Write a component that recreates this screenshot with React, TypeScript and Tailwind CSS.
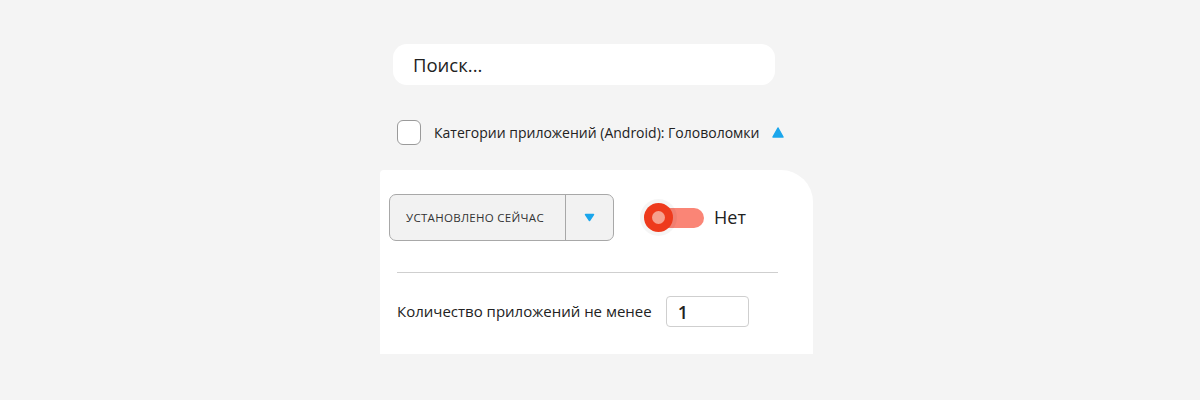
import React, { useState } from 'react';

export default function App() {
  const [checked, setChecked] = useState(false);
  const [on, setOn] = useState(false);
  const [count, setCount] = useState('1');

  return (
    <div className="w-[1200px] h-[400px] bg-[#f4f4f4] text-[#222] font-['Open_Sans',sans-serif] overflow-hidden">
      <div className="ml-[380px] w-[433px] pt-[44px]">
        {/* Search */}
        <div className="ml-[13px] w-[382px] h-[41px] bg-white rounded-[14px] flex items-center px-5">
          <input
            placeholder="Поиск..."
            className="w-full bg-transparent outline-none text-[18.5px] placeholder:text-[#222]"
          />
        </div>

        {/* Category filter */}
        <div className="ml-[17px] mt-[35px] flex items-center h-[25px]">
          <button
            onClick={() => setChecked(!checked)}
            className="w-[24px] h-[25px] rounded-[6px] border border-[#9a9a9a] bg-white"
          />
          <span className="ml-[13px] text-[14px]">Категории приложений (Android): Головоломки</span>
          <svg width="12" height="11" viewBox="0 0 12 11" className="ml-auto mr-[29px]">
            <path d="M6 1 L11 10 L1 10 Z" fill="#1ba6ec" stroke="#1ba6ec" strokeWidth="1.5" strokeLinejoin="round" />
          </svg>
        </div>

        {/* Panel */}
        <div className="mt-[25px] bg-white rounded-tr-[32px] rounded-tl-[4px] h-[184px] px-[9px] pt-[24px]">
          <div className="flex items-center">
            <div className="w-[225px] h-[47px] rounded-[7px] border border-[#a8a8a8] bg-[#f2f2f2] flex">
              <div className="flex-1 flex items-center pl-[16px] text-[11.5px] tracking-[0.3px] text-[#333]">
                УСТАНОВЛЕНО СЕЙЧАС
              </div>
              <div className="w-[48px] border-l border-[#a8a8a8] flex items-center justify-center">
                <svg width="11" height="9" viewBox="0 0 11 9">
                  <path d="M1.5 1.5 L9.5 1.5 L5.5 7.5 Z" fill="#1ba6ec" stroke="#1ba6ec" strokeWidth="1.5" strokeLinejoin="round" />
                </svg>
              </div>
            </div>

            <button onClick={() => setOn(!on)} className="ml-[30px] relative w-[60px] h-[30px] flex items-center">
              <span className="absolute left-[4px] right-0 h-[20px] rounded-full bg-[#fa8576]" />
              <span className="absolute left-0 w-[29px] h-[29px] rounded-full bg-[#ee3a1c] shadow-[0_0_0_4px_rgba(0,0,0,0.04)] flex items-center justify-center">
                <span className="w-[13px] h-[13px] rounded-full bg-[#f6a08e]" />
              </span>
            </button>
            <span className="ml-[10px] text-[18px]">{on ? 'Да' : 'Нет'}</span>
          </div>

          <div className="mt-[31px] ml-[8px] w-[381px] h-px bg-[#cfcfcf]" />

          <div className="mt-[23px] ml-[8px] flex items-center">
            <span className="text-[15px]">Количество приложений не менее</span>
            <input
              value={count}
              onChange={(e) => setCount(e.target.value)}
              className="ml-[14px] w-[83px] h-[31px] rounded-[4px] border border-[#cfcfcf] px-[11px] text-[18px] font-semibold outline-none"
            />
          </div>
        </div>
      </div>
    </div>
  );
}
